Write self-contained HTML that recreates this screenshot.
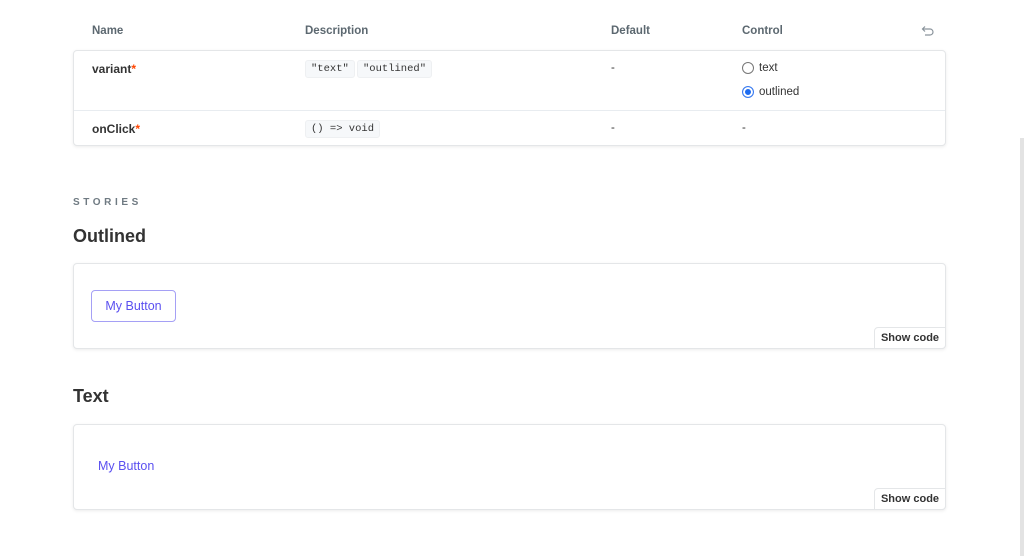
<!DOCTYPE html>
<html><head><style>
*{box-sizing:border-box;margin:0;padding:0}
body{width:1024px;height:556px;overflow:hidden;background:#fff;font-family:"Liberation Sans",sans-serif;color:#333;position:relative}
.abs{position:absolute}
.th{font-size:11.5px;font-weight:bold;color:#5c6870;top:25px}
.card{position:absolute;left:73px;width:873px;background:#fff;border:1px solid #e4e6e8;border-radius:4px;box-shadow:0 1px 3px rgba(0,0,0,0.08)}
.name{font-size:12px;font-weight:bold;color:#333}
.name span{color:#ff4400}
.code{position:absolute;font-family:"Liberation Mono",monospace;font-size:10.5px;background:#f6f8fa;border:1px solid #eef0f2;border-radius:3px;padding:1px 5px;color:#333;line-height:14px}
.t{font-size:11.5px;color:#333}
.radio{position:absolute;width:12px;height:12px;border-radius:50%;border:1px solid #777}
.sc{position:absolute;right:-1px;bottom:-1px;width:72px;height:22px;border:1px solid #e4e6e8;border-radius:4px 0 4px 0;font-size:11px;font-weight:bold;color:#333;text-align:center;line-height:20px;background:#fff}
h2{position:absolute;left:73px;font-size:18px;font-weight:bold;color:#333}
</style></head><body>
<div class="abs th" style="left:92px">Name</div>
<div class="abs th" style="left:305px">Description</div>
<div class="abs th" style="left:611px">Default</div>
<div class="abs th" style="left:742px">Control</div>
<svg class="abs" style="left:921px;top:25px" width="14" height="12" viewBox="0 0 14 12"><path d="M4 1.5 L1.5 4 L4 6.5 M1.5 4 H9 A3 3 0 0 1 9 10 H4" fill="none" stroke="#8a949c" stroke-width="1.2"/></svg>

<div class="card" style="top:50px;height:96px">
  <div style="position:absolute;left:0;right:0;top:59px;border-top:1px solid #e8ecf0"></div>
  <div class="abs name" style="left:18px;top:11px">variant<span>*</span></div>
  <div class="code" style="left:231px;top:9px">"text"</div>
  <div class="code" style="left:283px;top:9px">"outlined"</div>
  <div class="abs t" style="left:537px;top:11px">-</div>
  <div class="radio" style="left:668px;top:11px"></div>
  <div class="abs t" style="left:685px;top:11px">text</div>
  <div class="radio" style="left:668px;top:35px;border-color:#3a7bf0;background:#1e6cf0;box-shadow:inset 0 0 0 2px #fff"></div>
  <div class="abs t" style="left:685px;top:35px">outlined</div>
  <div class="abs name" style="left:18px;top:71px">onClick<span>*</span></div>
  <div class="code" style="left:231px;top:69px">() =&gt; void</div>
  <div class="abs t" style="left:537px;top:71px">-</div>
  <div class="abs t" style="left:668px;top:71px">-</div>
</div>

<div class="abs" style="left:73px;top:197px;font-size:10px;font-weight:bold;letter-spacing:3.6px;color:#6f7a82">STORIES</div>
<h2 style="top:226px">Outlined</h2>
<div class="card" style="top:263px;height:86px">
  <div style="position:absolute;left:17px;top:26px;width:85px;height:32px;border:1px solid #a5a0f5;border-radius:4px;color:#5b50f0;font-size:12.5px;text-align:center;line-height:30px">My Button</div>
  <div class="sc">Show code</div>
</div>
<h2 style="top:386px">Text</h2>
<div class="card" style="top:424px;height:86px">
  <div style="position:absolute;left:24px;top:34px;color:#5b50f0;font-size:12.5px">My Button</div>
  <div class="sc">Show code</div>
</div>
<div class="abs" style="left:1020px;top:138px;width:4px;height:418px;background:#e3e3e3"></div>
</body></html>
